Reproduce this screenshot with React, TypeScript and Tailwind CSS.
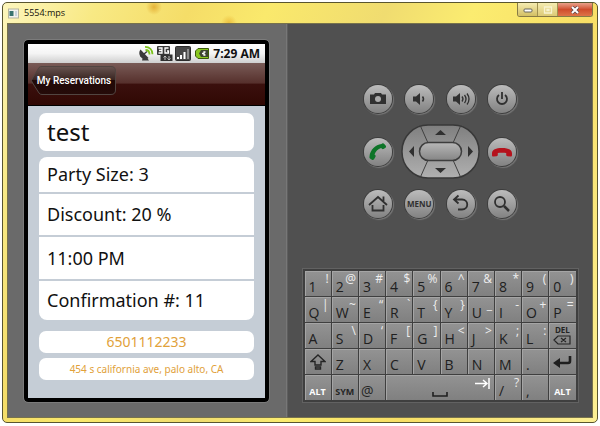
import React from "react";

function TitleBar() {
  return (
    <header className="flex h-[20px] items-start justify-between pl-[1px]">
      <div className="flex items-center gap-[5px] pt-[2px]">
        <svg width="11" height="11" viewBox="0 0 11 11" aria-hidden="true">
          <rect x=".5" y="1" width="10" height="9" fill="#f2f2ee" stroke="#b5b59e" />
          <rect x="1.500" y="3" width="4" height="5" fill="#39746f" />
          <rect x="7" y="3" width="2" height="5" fill="#c9d5dd" />
        </svg>
        <h1 className="font-['Open_Sans',sans-serif] text-[9px] leading-[16px] text-[#15130a]">5554:mps</h1>
      </div>
      <div className="flex h-[14px] overflow-hidden rounded-b-[3px] border border-t-0 border-[#877b45]">
        <button aria-label="Minimize" className="flex w-[20px] items-center justify-center border-r border-[#a0914f] bg-linear-to-b from-[#f5ecb0] to-[#d3bf62]">
          <svg width="10" height="6" viewBox="0 0 10 6"><rect x="1" y="2" width="8" height="3" rx="1" fill="#fff" stroke="#66665c" /></svg>
        </button>
        <button aria-label="Maximize" className="flex w-[20px] items-center justify-center border-r border-[#a0914f] bg-linear-to-b from-[#f5ecb0] to-[#dcca74]">
          <svg width="10" height="8" viewBox="0 0 10 8"><path d="M1.500 1h7v6h-7zM4 3.500h2v1H4z" fill="none" stroke="#f8f3d0" strokeWidth="1.300" /></svg>
        </button>
        <button aria-label="Close" className="flex w-[34px] items-center justify-center bg-linear-to-b from-[#e8a08a] via-[#cf4d2c] to-[#de7448]">
          <svg width="10" height="8" viewBox="0 0 10 8"><path d="M2 1l6 6M8 1L2 7" stroke="#59454a" strokeWidth="3.400" /><path d="M2 1l6 6M8 1L2 7" stroke="#fff" strokeWidth="2" /></svg>
        </button>
      </div>
    </header>
  );
}

function StatusBar() {
  return (
    <div className="flex h-[19px] items-center justify-end bg-linear-to-b from-white via-[#f4f4f4] to-[#cfcfcf] pr-[5px]">
      <svg width="72" height="17" viewBox="0 0 72 17" aria-hidden="true">
        <path d="M2.500 4.500c-2.500 3-1 8 3 9.500q3 1 5-1z" fill="#3a3a3a" />
        <path d="M5 12l-1 3.500h7l-3-4z" fill="#3a3a3a" />
        <path d="M6 9l3-2.500" stroke="#3a3a3a" strokeWidth="1.500" />
        <path d="M7.500 5c2.500 0 4 1.500 4 4.500M7 1.800c4.500 0 7.500 3 7.500 7.500" fill="none" stroke="#7cc21c" strokeWidth="1.800" />
        <rect x="19" y="1" width="13" height="9" rx="1" fill="#383838" />
        <path d="M20.500 3h3.500v5h-3.500M21 5.500h3M30.500 3H27v5h3.500V6H29" fill="none" stroke="#fff" strokeWidth="1.300" />
        <path d="M22.500 9.500h12V16h-12z" fill="#303030" />
        <path d="M27 15v-4m-1.500 1.500L27 11l1.500 1.500M31 11v4m-1.500-1.500L31 15l1.500-1.500" fill="none" stroke="#bbb" />
        <rect x="37.500" y="1.500" width="15" height="14" rx="1" fill="#474747" stroke="#2c2c2c" />
        <path d="M39 12h2v2h-2zM42 10h2v4h-2zM45.500 7h2v7h-2z" fill="#fff" />
        <path d="M49 4h2v10h-2z" fill="#8c8c8c" />
        <path d="M60 3.500h10.500v10H60L57.500 11V6z" fill="#89c71f" stroke="#3b5a0a" />
        <path d="M63 5h7v7h-7l-2-3.500z" fill="#3d4332" />
        <path d="M64 8.500h2M67.500 7H66v3h1.500" fill="none" stroke="#fff" strokeWidth="1.300" />
      </svg>
      <time className="ml-[3px] font-['Open_Sans',sans-serif] text-[12px] leading-[18px] font-bold text-[#111]">7:29 AM</time>
    </div>
  );
}

function BackButton() {
  return (
    <button className="relative mt-[3px] ml-[3px] h-[30px] w-[85px]">
      <svg className="absolute inset-0" width="85" height="30" viewBox="0 0 85 30" aria-hidden="true">
        <defs>
          <linearGradient id="back" x2="0" y2="1">
            <stop offset="0" stopColor="#685450" />
            <stop offset=".48" stopColor="#382421" />
            <stop offset=".5" stopColor="#210907" />
            <stop offset="1" stopColor="#250b09" />
          </linearGradient>
        </defs>
        <path d="M8 1.500Q9 .5 11 .5H80Q84.500 .5 84.500 5V24Q84.500 28.500 80 28.500H11Q9 28.500 8 27L1 16Q0 14.500 1 13Z" fill="url(#back)" stroke="#514541" />
      </svg>
      <span className="relative block pl-[1px] font-['Roboto','Liberation_Sans',sans-serif] text-[10px] leading-[28px] font-medium whitespace-nowrap text-white">My Reservations</span>
    </button>
  );
}

function Phone() {
  return (
    <main className="mt-[16px] mb-[15px] ml-[16px] flex w-[245px] flex-col rounded-[4px] border-4 border-black bg-[#c5cdd6] outline outline-[#7b7b7b]">
      <StatusBar />
      <nav className="h-[43px] border-b border-black bg-[linear-gradient(#795b57_0%,#56302c_48%,#3b100d_50%,#300804_100%)]">
        <BackButton />
      </nav>
      <div className="flex flex-col px-[11px] pt-[7px] pb-[18px] font-['Noto_Sans','Open_Sans',sans-serif] text-[#111]">
        <h2 className="rounded-[7px] bg-white px-[8px] text-[24px] leading-[38px]">test</h2>
        <ul className="mt-[6px] flex flex-col gap-[2px] overflow-hidden rounded-[8px] text-[18px]">
          <li className="bg-white px-[8px] leading-[35px]">Party Size: 3</li>
          <li className="bg-white px-[8px] leading-[41px]">Discount: 20 %</li>
          <li className="bg-white px-[8px] leading-[42px]">11:00 PM</li>
          <li className="bg-white px-[8px] leading-[39px]">Confirmation #: 11</li>
        </ul>
        <a href="tel:6501112233" className="mt-[11px] block rounded-[7px] bg-white text-center text-[14px] leading-[22px] text-[#e1a13a]">6501112233</a>
        <a href="#map" className="mt-[5px] block rounded-[7px] bg-white text-center text-[10px] leading-[22px] text-[#e1a13a]">454 s california ave, palo alto, CA</a>
      </div>
    </main>
  );
}

function RoundKey({ label, children }: { label: string; children: React.ReactNode }) {
  return (
    <button aria-label={label} className="flex size-[28px] items-center justify-center rounded-full bg-linear-to-b from-[#bcbcbc] to-[#828282] text-[#303030] shadow-[0_0_0_1px_#3d3d3d,1px_1px_1px_1px_#777]">
      {children}
    </button>
  );
}

function Glyph({ children }: { children: React.ReactNode }) {
  return (
    <svg width="22" height="22" viewBox="0 0 22 22" fill="none" stroke="currentColor" strokeWidth="1.800" aria-hidden="true">{children}</svg>
  );
}

function DPad() {
  return (
    <div className="relative h-[55px] w-[79px]">
      <svg width="79" height="55" viewBox="0 0 79 55" aria-hidden="true">
        <defs>
          <linearGradient id="pad" x2="0" y2="1"><stop stopColor="#7f7f7f" /><stop offset="1" stopColor="#b0b0b0" /></linearGradient>
          <linearGradient id="mid" x2="0" y2="1"><stop stopColor="#b8b8b8" /><stop offset="1" stopColor="#858585" /></linearGradient>
        </defs>
        <rect x="1" y="1" width="77" height="53" rx="26" fill="url(#pad)" stroke="#383838" strokeWidth="1.500" />
        <path d="M19 1l8 18M60 1l-8 18M19 54l8-18M60 54l-8-18" stroke="#404040" />
        <rect x="18.500" y="18.500" width="42" height="18" rx="9" fill="url(#mid)" stroke="#3d3d3d" strokeWidth="1.500" />
        <path d="M39.500 6l5.500 5H34zM39.500 49l5.500-5H34zM8 27.500l5-5.500v11zM72 27.500l-5-5.500v11z" fill="#303030" />
      </svg>
      <button aria-label="Up" className="absolute top-0 left-[22px] h-[17px] w-[34px]" />
      <button aria-label="Down" className="absolute bottom-0 left-[22px] h-[17px] w-[34px]" />
      <button aria-label="Left" className="absolute top-[12px] left-0 h-[30px] w-[17px]" />
      <button aria-label="Right" className="absolute top-[12px] right-0 h-[30px] w-[17px]" />
      <button aria-label="Select" className="absolute top-[19px] left-[19px] h-[17px] w-[41px] rounded-full" />
    </div>
  );
}

function Controls() {
  return (
    <section aria-label="Device controls" className="mx-auto flex w-[152px] flex-col">
      <div className="flex justify-between">
        <RoundKey label="Camera"><Glyph><path d="M3 6.500h4l1-1.500h6l1 1.500h4V16H3z" fill="currentColor" stroke="none" /><circle cx="11" cy="11" r="3" fill="#aaa" stroke="none" /></Glyph></RoundKey>
        <RoundKey label="Volume down"><Glyph><path d="M5 8.500h3L12 5v12l-4-3.500H5z" fill="currentColor" stroke="none" /><path d="M14.500 8.500q2 2.500 0 5" strokeWidth="1.500" /></Glyph></RoundKey>
        <RoundKey label="Volume up"><Glyph><path d="M3 8.500h3L10 5v12l-4-3.500H3z" fill="currentColor" stroke="none" /><path d="M12 8.500q2 2.500 0 5M14.500 7q3 4 0 8M17 5.500q4 5.500 0 11" strokeWidth="1.300" /></Glyph></RoundKey>
        <RoundKey label="Power"><Glyph><path d="M8 7a5 5 0 1 0 6 0M11 4v7" /></Glyph></RoundKey>
      </div>
      <div className="mt-[11px] flex items-center justify-between">
        <RoundKey label="Call"><Glyph><path d="M2.500 15.500C3 9 8.500 3.500 14.500 3c1-1 2-.8 3 .2l1.300 1.600c.6 1 .2 1.600-.6 2.200l-1.700 1c-1 .4-1.600 0-2.400-1C11 8 8.300 10.800 7.500 13.500c1 .6 1.500 1.200 1 2.200l-1.300 2.200c-.6 1-1.400 1.300-2.300.8L3 17.500c-.6-.5-.7-1.200-.5-2z" fill="#0d7428" stroke="none" /></Glyph></RoundKey>
        <DPad />
        <RoundKey label="End call"><Glyph><path d="M1 12.500C1 8.500 5 7 11 7s10 1.500 10 5.500v1.800c0 1-.6 1.400-1.500 1.300l-3-.3c-1-.1-1.300-.7-1.300-1.500v-1.700c-2.500-.6-6-.6-8.400 0v1.700c0 .8-.4 1.400-1.300 1.500l-3 .3c-.9.100-1.500-.3-1.500-1.300z" fill="#b5121c" stroke="none" /></Glyph></RoundKey>
      </div>
      <div className="mt-[11px] flex justify-between">
        <RoundKey label="Home"><Glyph><path d="M2 12l9-8 9 8M16.500 8V3.500M5.500 12v5.500h11V12" /></Glyph></RoundKey>
        <RoundKey label="Menu"><span className="font-['Open_Sans',sans-serif] text-[8px] leading-[10px] font-bold">MENU</span></RoundKey>
        <RoundKey label="Back"><Glyph><path d="M8.500 2.500L4 6.500l4.500 4M4 6.500h8c7 0 7 10 0 10H8" /></Glyph></RoundKey>
        <RoundKey label="Search"><Glyph><circle cx="9" cy="9" r="5" /><path d="M13 13l5 5" strokeWidth="2.500" /></Glyph></RoundKey>
      </div>
    </section>
  );
}

const KEY = "flex h-full min-w-0 justify-between overflow-hidden border-r border-b border-[#3f3f3f] bg-linear-to-b from-[#939393] to-[#808080] shadow-[inset_1px_1px_0_#a5a5a5] ";

function Key({ main, alt }: { main: string; alt?: string }) {
  return (
    <button aria-label={alt ? `${main} ${alt}` : main} className={KEY + "pr-[2px] pl-[4px]"}>
      <span className="self-end text-[14px] leading-[18px] text-[#202020]">{main}</span>
      {alt && <span className="-ml-[3px] text-[12px] leading-[15px] text-[#eeeeee]">{alt}</span>}
    </button>
  );
}

const ROWS: string[][] = [
  ["1", "!"], ["2", "@"], ["3", "#"], ["4", "$"], ["5", "%"], ["6", "^"], ["7", "&"], ["8", "*"], ["9", "("], ["0", ")"],
  ["Q", "|"], ["W", "~"], ["E", "“"], ["R", "`"], ["T", "{"], ["Y", "}"], ["U", "_"], ["I", "-"], ["O", "+"], ["P", "="],
  ["A"], ["S", "\\"], ["D", "‘"], ["F", "["], ["G", "]"], ["H", "<"], ["J", ">"], ["K", ";"], ["L", ":"],
];

function Keyboard() {
  return (
    <section aria-label="Keyboard" className="mx-auto mt-[51px] grid w-[275px] auto-rows-[26px] grid-cols-10 border-2 border-r border-b border-[#3f3f3f] font-['Open_Sans','Noto_Sans',sans-serif] outline outline-[#626262]">
      {ROWS.map(([main, alt]) => <Key key={main} main={main} alt={alt} />)}
      <button aria-label="Delete" className={KEY + "flex-col items-center pt-[2px] pb-[3px]"}>
        <span className="text-[8px] leading-[9px] font-bold text-[#252525]">DEL</span>
        <svg width="18" height="10" viewBox="0 0 18 10" fill="none" stroke="#252525"><path d="M1 5l4-4h12v8H5zM8 3l5 4M13 3L8 7" strokeWidth="1.200" /></svg>
      </button>
      <button aria-label="Shift" className={KEY + "items-center justify-center"}>
        <svg className="mx-auto" width="16" height="16" viewBox="0 0 16 16" fill="none" stroke="#252525" strokeWidth="1.400"><path d="M8 1l7 6.500h-4V11H5V7.500H1zM5.500 13h5v2h-5z" /></svg>
      </button>
      {["Z", "X", "C", "V", "B", "N", "M", "."].map((k) => <Key key={k} main={k} />)}
      <button aria-label="Enter" className={KEY + "items-center"}>
        <svg className="mx-auto" width="20" height="16" viewBox="0 0 20 16"><path d="M18 2v5q0 2-2 2H6" fill="none" stroke="#202020" strokeWidth="2.600" /><path d="M1 9l7-5v10z" fill="#202020" /></svg>
      </button>
      <button className={KEY + "items-end pb-[2px] text-[9px] leading-[13px] font-bold text-white"}><span className="mx-auto">ALT</span></button>
      <button className={KEY + "items-end pb-[2px] text-[9px] leading-[13px] font-bold text-[#252525]"}><span className="mx-auto">SYM</span></button>
      <button className={KEY + "pl-[2px]"}><span className="self-end text-[14px] leading-[18px] text-[#252525]">@</span></button>
      <button aria-label="Space and tab" className={KEY + "col-span-4 pr-[4px] pl-[46px]"}>
        <svg className="mb-[3px] self-end" width="16" height="5" viewBox="0 0 16 5"><path d="M1 0v4h14V0" fill="none" stroke="#202020" strokeWidth="1.600" /></svg>
        <svg className="mt-[3px]" width="15" height="11" viewBox="0 0 15 11"><path d="M0 5.500h12M8 2l4 3.500L8 9M14 0v11" fill="none" stroke="#fff" strokeWidth="1.500" /></svg>
      </button>
      <Key main="/" alt="?" />
      <Key main="," />
      <button className={KEY + "items-end pb-[2px] text-[9px] leading-[13px] font-bold text-white"}><span className="mx-auto">ALT</span></button>
    </section>
  );
}

export default function App() {
  return (
    <div className="flex min-h-screen bg-white p-[2px] pb-[3px]">
      <div className="flex flex-1 flex-col rounded-[5px] border border-[#59552f] bg-[radial-gradient(circle_at_151px_4px,#e5b339_0px,#e5b33900_8px),radial-gradient(circle_at_226px_20px,#ecc03f_0px,#ecc03f00_8px),linear-gradient(115deg,#fdf6bd_0%,#f8e984_12%,#f5dd68_24%,#fae96c_34%,#f0dc70_49%,#fbec70_60%,#f8df66_75%,#fdf095_100%)] px-[4px] pb-[4px]">
        <TitleBar />
        <div className="flex flex-1 border border-[#77724c] bg-[#505050]">
          <div className="w-[278px] shrink-0 bg-[#6a6a6a]"><Phone /></div>
          <div className="w-[2px] shrink-0 border-l border-[#777] bg-[#5e5e5e]" />
          <div className="min-w-0 flex-1 pt-[61px]">
            <Controls />
            <Keyboard />
          </div>
        </div>
      </div>
    </div>
  );
}
